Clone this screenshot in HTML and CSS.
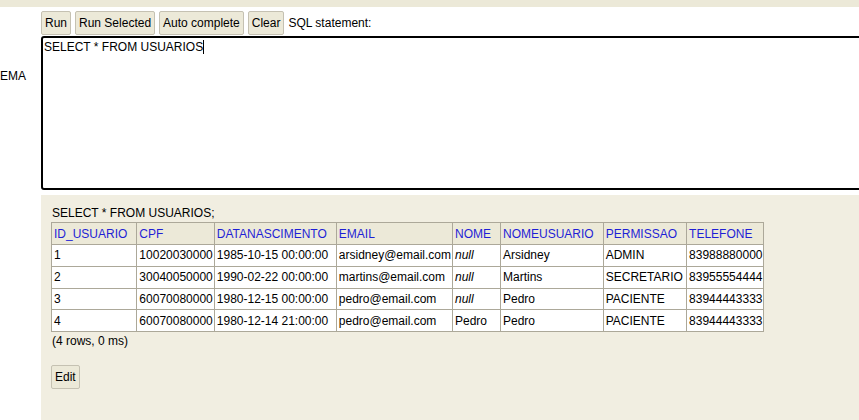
FILE: index.html
```html
<!DOCTYPE html>
<html>
<head>
<meta charset="utf-8">
<link rel="stylesheet" href="styles.css">
</head>
<body>
<div class="topbar"></div>
<div class="main">
  <div class="side"><span class="tree-item">EMA</span></div>
  <div class="content">
    <div class="toolbar">
      <button class="btn">Run</button>
      <button class="btn">Run Selected</button>
      <button class="btn">Auto complete</button>
      <button class="btn">Clear</button>
      <span class="label">SQL statement:</span>
    </div>
    <div class="editor">SELECT * FROM USUARIOS<span class="caret"></span></div>
    <div class="result">
      <div class="query">SELECT * FROM USUARIOS;</div>
      <table class="grid">
        <thead>
          <tr><th>ID_USUARIO</th><th>CPF</th><th>DATANASCIMENTO</th><th>EMAIL</th><th>NOME</th><th>NOMEUSUARIO</th><th>PERMISSAO</th><th>TELEFONE</th></tr>
        </thead>
        <tbody>
          <tr><td>1</td><td>10020030000</td><td>1985-10-15 00:00:00</td><td>arsidney@email.com</td><td><i>null</i></td><td>Arsidney</td><td>ADMIN</td><td>83988880000</td></tr>
          <tr><td>2</td><td>30040050000</td><td>1990-02-22 00:00:00</td><td>martins@email.com</td><td><i>null</i></td><td>Martins</td><td>SECRETARIO</td><td>83955554444</td></tr>
          <tr><td>3</td><td>60070080000</td><td>1980-12-15 00:00:00</td><td>pedro@email.com</td><td><i>null</i></td><td>Pedro</td><td>PACIENTE</td><td>83944443333</td></tr>
          <tr><td>4</td><td>60070080000</td><td>1980-12-14 21:00:00</td><td>pedro@email.com</td><td>Pedro</td><td>Pedro</td><td>PACIENTE</td><td>83944443333</td></tr>
        </tbody>
      </table>
      <div class="summary">(4 rows, 0 ms)</div>
      <button class="btn edit">Edit</button>
    </div>
  </div>
</div>
</body>
</html>
```
FILE: styles.css
```css
html, body {
  margin: 0;
  padding: 0;
  background: #ffffff;
  font-family: "Liberation Sans", Arial, sans-serif;
  font-size: 12px;
  color: #000;
  overflow: hidden;
  height: 420px;
}
.topbar {
  height: 7px;
  background: #ece9d8;
}
.main {
  display: flex;
  height: 413px;
}
.side {
  width: 41px;
  flex: none;
  padding-top: 62px;
  box-sizing: border-box;
  overflow: hidden;
}
.tree-item {
  display: block;
  line-height: 14px;
}
.content {
  flex: 1;
  min-width: 0;
  overflow: hidden;
  display: flex;
  flex-direction: column;
}
.toolbar {
  display: flex;
  align-items: center;
  gap: 4px;
  padding-top: 4px;
  height: 24px;
  box-sizing: content-box;
  margin-bottom: 1px;
}
.btn {
  font-family: "Liberation Sans", Arial, sans-serif;
  font-size: 12px;
  height: 24px;
  padding: 0 3px;
  background: #ece9d8;
  border: 1px solid #c5c1b2;
  border-radius: 2px;
  color: #000;
  line-height: 22px;
}
.label {
  margin-left: 0;
}
.editor {
  width: 840px;
  height: 154px;
  box-sizing: border-box;
  border: 2px solid #000;
  border-radius: 3px;
  padding: 2px 1px;
  line-height: 14px;
  flex: none;
}
.caret {
  display: inline-block;
  width: 0;
  height: 14px;
  border-left: 1px solid #000;
  vertical-align: top;
}
.result {
  margin-top: 5px;
  flex: 1;
  background: #f1eee1;
  padding: 10px 10px 0 10px;
}
.query {
  line-height: 16px;
  margin-left: 1px;
  margin-bottom: 1px;
}
.grid {
  border-collapse: collapse;
}
.grid th, .grid td {
  border: 1px solid #aca899;
  line-height: 14px;
  white-space: nowrap;
  text-align: left;
}
.grid th {
  background: #ece9d8;
  color: #1f1fd6;
  font-weight: normal;
  height: 22px;
  box-sizing: border-box;
  padding: 3px 9px 3px 2px;
}
.grid td {
  background: #ffffff;
  height: 21.75px;
  box-sizing: border-box;
  padding: 3px 1px 3px 2px;
}
.summary {
  margin-left: 1px;
  line-height: 16px;
  margin-top: 1px;
}
.edit {
  margin-top: 16px;
  padding: 0 3px;
}
```
